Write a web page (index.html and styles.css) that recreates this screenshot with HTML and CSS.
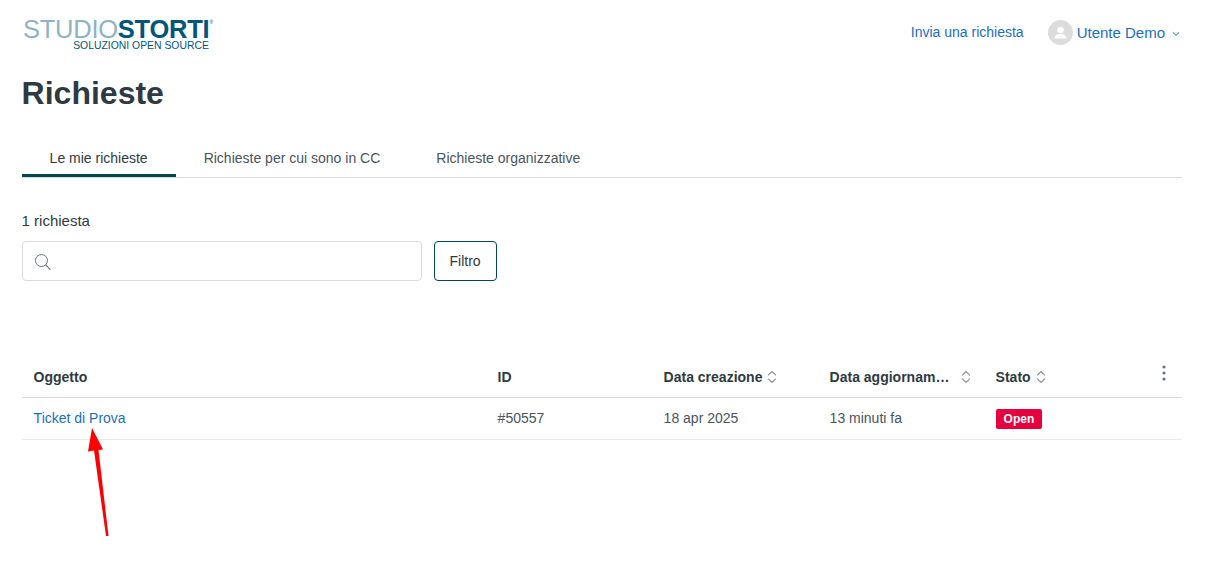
FILE: index.html
```html
<!DOCTYPE html>
<html lang="it">
<head>
<meta charset="utf-8">
<title>Richieste</title>
<link rel="stylesheet" href="styles.css">
</head>
<body>
<div class="page">
  <header class="topbar">
    <a class="logo" href="#">
      <span class="logo-main"><span class="logo-light">STUDIO</span><span class="logo-dark">STORTI</span><sup class="logo-reg">®</sup></span>
      <span class="logo-sub">SOLUZIONI OPEN SOURCE</span>
    </a>
    <nav class="topnav">
      <a class="toplink" href="#">Invia una richiesta</a>
      <a class="user" href="#">
        <span class="avatar">
          <svg width="25" height="25" viewBox="0 0 25 25"><circle cx="12.5" cy="10" r="3.2" fill="#fff"/><path d="M6.5 18.5c0-3 2.8-4.4 6-4.4s6 1.4 6 4.4z" fill="#fff"/></svg>
        </span>
        <span>Utente Demo</span>
        <svg class="caret" width="8" height="6" viewBox="0 0 8 6"><path d="M.8 1.4 4 4.4l3.2-3" fill="none" stroke="currentColor" stroke-width="1"/></svg>
      </a>
    </nav>
  </header>

  <h1 class="title">Richieste</h1>

  <ul class="tabs">
    <li class="tab tab-active">Le mie richieste</li>
    <li class="tab">Richieste per cui sono in CC</li>
    <li class="tab">Richieste organizzative</li>
  </ul>

  <p class="count">1 richiesta</p>

  <div class="filters">
    <label class="search">
      <svg width="18" height="18" viewBox="0 0 18 18"><circle cx="7.5" cy="7.5" r="6" fill="none" stroke="#68737d" stroke-width="1"/><path d="m11.8 11.8 4.6 4.8" fill="none" stroke="#68737d" stroke-width="1.2"/></svg>
    </label>
    <button class="filter-btn" type="button">Filtro</button>
  </div>

  <table class="requests">
    <colgroup>
      <col class="col-subject"><col class="col-id"><col class="col-date"><col class="col-date"><col>
    </colgroup>
    <thead>
      <tr>
        <th>Oggetto</th>
        <th>ID</th>
        <th><span class="sort">Data creazione <svg width="10" height="14" viewBox="0 0 10 14"><path d="M1.2 5.2 5 1.6l3.8 3.6M1.2 8.8 5 12.4l3.8-3.6" fill="none" stroke="#49545c" stroke-width="1"/></svg></span></th>
        <th><span class="sort sort-wide"><span>Data aggiornam…</span> <svg width="10" height="14" viewBox="0 0 10 14"><path d="M1.2 5.2 5 1.6l3.8 3.6M1.2 8.8 5 12.4l3.8-3.6" fill="none" stroke="#49545c" stroke-width="1"/></svg></span></th>
        <th class="th-last">
          <span class="sort">Stato <svg width="10" height="14" viewBox="0 0 10 14"><path d="M1.2 5.2 5 1.6l3.8 3.6M1.2 8.8 5 12.4l3.8-3.6" fill="none" stroke="#49545c" stroke-width="1"/></svg></span>
          <svg class="kebab" width="4" height="16" viewBox="0 0 4 16"><circle cx="2" cy="2" r="1.6" fill="#68737d"/><circle cx="2" cy="8" r="1.6" fill="#68737d"/><circle cx="2" cy="14" r="1.6" fill="#68737d"/></svg>
        </th>
      </tr>
    </thead>
    <tbody>
      <tr>
        <td><a class="ticket" href="#">Ticket di Prova</a></td>
        <td>#50557</td>
        <td>18 apr 2025</td>
        <td>13 minuti fa</td>
        <td><span class="badge">Open</span></td>
      </tr>
    </tbody>
  </table>
</div>

<svg class="arrow" width="40" height="120" viewBox="0 0 40 120">
  <polygon points="11,1 7,24.5 13,23.5 25,109 27.5,109 17.5,23 22,22.5" fill="#f00"/>
</svg>
</body>
</html>
```

FILE: styles.css
```css
* { box-sizing: border-box; }
html, body { margin: 0; padding: 0; background: #fff; }
body {
  font-family: "Liberation Sans", Arial, sans-serif;
  font-size: 14px;
  color: #2f3941;
  height: 562px;
  overflow: hidden;
  position: relative;
}
a { text-decoration: none; color: #1a6ec0; }

.page { width: 1182px; padding-left: 21.6px; }

.topbar {
  display: flex;
  justify-content: space-between;
  align-items: flex-start;
  height: 66px;
  padding-top: 16px;
}
.logo { display: flex; flex-direction: column; padding-left: 1.4px; }
.logo-main {
  font-size: 25.5px;
  line-height: 27px;
  letter-spacing: -0.25px;
  white-space: nowrap;
  display: flex;
}
.logo-light { color: #8fb3c6; }
.logo-dark { color: #00567a; font-weight: 700; }
.logo-reg { color: #00567a; font-size: 5px; line-height: 9px; margin-top: 2px; }
.logo-sub {
  color: #00567a;
  font-size: 10.4px;
  line-height: 10px;
  margin-top: -2px;
  padding-left: 50.2px;
  white-space: nowrap;
}

.topnav { display: flex; align-items: center; height: 32px; margin-right: 3px; }
.toplink { margin-right: 24px; }
.user { display: flex; align-items: center; font-size: 15px; }
.avatar {
  width: 25px;
  height: 25px;
  border-radius: 50%;
  background: #dcdcdc;
  margin-right: 4px;
  display: flex;
}
.caret { margin-left: 6.6px; margin-top: 3px; margin-right: -0.6px; }

.title {
  margin: 7px 0 0;
  font-size: 32px;
  line-height: 40px;
  font-weight: 700;
  height: 40px;
}

.tabs {
  list-style: none;
  margin: 19px 0 0;
  padding: 0;
  display: flex;
  border-bottom: 1px solid #d8dcde;
  height: 46px;
}
.tab {
  padding: 5px 28px 0;
  height: 45px;
  line-height: 42px;
  color: #49545c;
  border-bottom: 3px solid transparent;
}
.tab-active { border-bottom-color: #03484f; color: #2f3941; }

.count { margin: 0; padding-top: 33px; font-size: 15px; line-height: 20px; height: 63px; color: #2f3941; }

.filters { display: flex; gap: 12px; }
.search {
  width: 400px;
  height: 40px;
  border: 1px solid #d8dcde;
  border-radius: 4px;
  display: flex;
  align-items: center;
  padding-left: 11px;
  padding-top: 1px;
}
.filter-btn {
  width: 63px;
  height: 40px;
  background: #fff;
  border: 1px solid #03484f;
  border-radius: 4px;
  font: inherit;
  color: #2f3941;
  padding: 0;
}

.requests {
  width: 100%;
  border-collapse: collapse;
  table-layout: fixed;
  margin-top: 75px;
}
.col-subject { width: 464px; }
.col-id, .col-date { width: 166px; }
.requests th, .requests td {
  text-align: left;
  padding: 0 12px;
}
.requests th {
  height: 41px;
  padding-top: 2px;
  border-bottom: 1px solid #d8dcde;
  font-weight: 700;
  color: #2f3941;
}
.requests td {
  height: 42px;
  border-bottom: 1px solid #e9ebed;
  color: #49545c;
}
.sort { display: inline-flex; align-items: center; gap: 5px; white-space: nowrap; }
.sort-wide { width: 141px; justify-content: space-between; }
.th-last { position: relative; }
.kebab { position: absolute; right: 16px; top: 9px; }
.ticket { color: #1a6ec0; }
.badge {
  display: inline-block;
  background: #e6003d;
  color: #fff;
  font-size: 12px;
  font-weight: 700;
  line-height: 20px;
  padding: 0 8px;
  border-radius: 2px;
  vertical-align: middle;
  margin-top: 2px;
}
.arrow { position: absolute; left: 81px; top: 427px; }
```
